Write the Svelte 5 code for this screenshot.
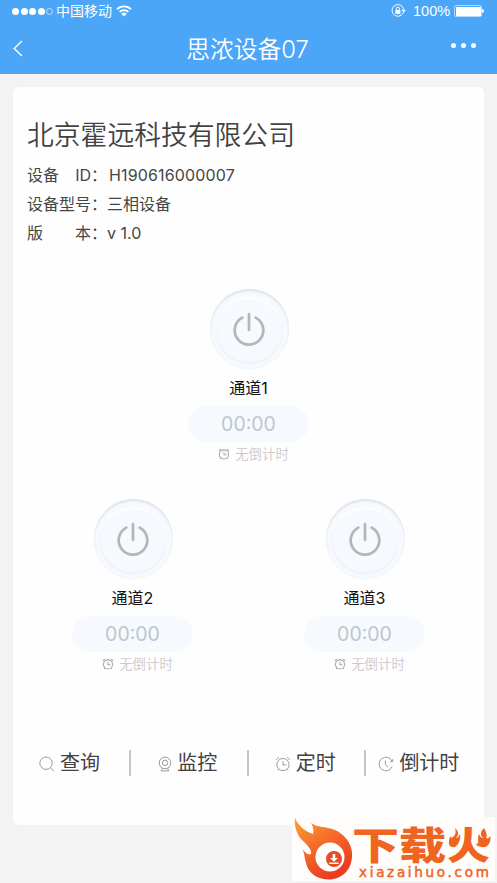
<script>
  let company = "北京霍远科技有限公司";
  let title = "思浓设备07";

  let top = { id: 1, name: "通道1", time: "00:00", note: "无倒计时" };
  let bottom = [
    { id: 2, name: "通道2", time: "00:00", note: "无倒计时" },
    { id: 3, name: "通道3", time: "00:00", note: "无倒计时" }
  ];
</script>

{#snippet clock()}
  <svg viewBox="0 0 16 16" class="clock">
    <circle cx="8" cy="8.6" r="6.1" />
    <path d="M8 5.2v3.8h3.4M1.2 3.9Q2 2 4 1.6M14.8 3.9Q14 2 12 1.6M3.6 13.5l-.8 1M12.4 13.5l.8 1" />
  </svg>
{/snippet}

{#snippet channel(c)}
  <div class="channel">
    <button class="power" aria-label={c.name}>
      <span class="inner">
        <svg viewBox="0 0 34 34">
          <path d="M10.3 5.6a14.3 14.3 0 1 0 13.4 0M17 2.2v15.6" />
        </svg>
      </span>
    </button>
    <div class="name">{c.name}</div>
    <div class="time">{c.time}</div>
    <div class="note">{@render clock()}<span>{c.note}</span></div>
  </div>
{/snippet}

<div class="screen">
  <header>
    <div class="status">
      <div class="signal"><i></i><i></i><i></i><i></i><i class="empty"></i></div>
      <span class="carrier">中国移动</span>
      <svg class="wifi" viewBox="0 0 16 12">
        <path d="M1 4.3a10 10 0 0 1 14 0M3.5 6.9a6.4 6.4 0 0 1 9 0" />
        <path class="fill" d="M8 11.4 5.2 8.8a4 4 0 0 1 5.6 0z" />
      </svg>
      <svg class="lock" viewBox="0 0 15 14">
        <path d="M12.6 7.6a5.8 5.8 0 1 1 .1-1.8M11 6.1h3.2l-1.6 2z" />
        <path d="M5.3 6V4.8a1.6 1.6 0 0 1 3.2 0V6" />
        <rect x="4.4" y="5.9" width="5" height="4" />
      </svg>
      <span class="percent">100%</span>
      <div class="battery"><b></b></div>
    </div>
    <div class="bar">
      <svg class="back" viewBox="0 0 10 17"><path d="M9 1 1.2 8.5 9 16" /></svg>
      <h1>{title}</h1>
      <div class="more"><i></i><i></i><i></i></div>
    </div>
  </header>

  <main>
    <h2>{company}</h2>
    <div class="info">
      <div class="row"><span class="label"><span>设备</span><span>ID：</span></span><span class="value serial">H190616000007</span></div>
      <div class="row"><span class="label"><span>设备型号：</span></span><span class="value">三相设备</span></div>
      <div class="row"><span class="label"><span>版</span><span>本：</span></span><span class="value">v 1.0</span></div>
    </div>

    <div class="channels single">{@render channel(top)}</div>
    <div class="channels">
      {#each bottom as c (c.id)}
        {@render channel(c)}
      {/each}
    </div>

    <nav>
      <a href="#query">
        <svg viewBox="0 0 16 16"><circle cx="7" cy="7.2" r="6.2" /><path d="m11.5 11.7 3.6 3.5" /></svg>
        <span>查询</span>
      </a>
      <a href="#monitor" class="monitor">
        <svg class="small" viewBox="0 0 14 16">
          <circle cx="7" cy="7" r="5.8" /><circle cx="7" cy="6.8" r="2.7" />
          <path d="M4 12.3 3.6 14.9M10 12.3l.4 2.6M2.8 14.9h8.4" />
        </svg>
        <span>监控</span>
      </a>
      <a href="#timer">{@render clock()}<span>定时</span></a>
      <a href="#countdown">
        <svg viewBox="0 0 16 16"><path d="M14.2 10.6a6.8 6.8 0 1 1-.1-5.4M14.7 3.2v2.5h-2.6M7.4 4.5v4.2l2.8 2.4" /></svg>
        <span>倒计时</span>
      </a>
    </nav>
  </main>

  <div class="watermark">
    <svg class="flame" viewBox="0 0 60 64">
      <defs>
        <linearGradient id="fire" x1="0" y1="0" x2=".55" y2="1">
          <stop offset="0" stop-color="#fba13a" />
          <stop offset=".5" stop-color="#f56b29" />
          <stop offset="1" stop-color="#e93c23" />
        </linearGradient>
      </defs>
      <path fill="url(#fire)" d="M3 1C6 8 12 14 21 17C22 13 21 9 19 6C26 11 33 9 43 13C54 18 61 28 60 40C59 54 49 62.500 37 62.500C25 62.500 16 56 14 46C12.500 41 12.500 37 10.500 32C13 36 16 38 19 37C20 32 15 28 9 22C5 17 2 9 3 1Z" />
      <circle cx="38" cy="40" r="14.5" fill="#fff" />
      <circle cx="42" cy="42" r="8" fill="#e94b26" />
      <path fill="#fff" d="M40.7 37h2.6v4h2.6L42 44.8 38 41h2.7zM37.3 45.5h9.4v1.6h-9.4z" />
    </svg>
    <div class="brand">
      <div class="zh"><span class="wide">下载</span><span class="fire">火</span></div>
      <div class="url">xiazaihuo.com</div>
    </div>
    <svg class="sparks" viewBox="0 0 44 26">
      <path class="gap" d="M0 0h16v13l-4 9H0zM28 0h16v22H32l-4-8z" />
      <path d="M7 2C11 6 11 9 8 12C10 12 11 10 12 8C13 13 11 18 7 21C3 22 0 19 1 15C1 13 2 12 2 10C3 12 4 12 5 11C8 8 8 6 7 2Z" />
      <path d="M36 2C32 6 32 9 35 12C33 12 32 10 31 8C29 13 31 16 30 19C32 22 38 22 40 19C43 16 42 13 43 10C41 12 39 13 38 12C40 9 38 6 36 2Z" />
    </svg>
  </div>
</div>

<style>
  :global(body) {
    margin: 0;
  }

  .screen {
    position: relative;
    width: 497px;
    height: 883px;
    overflow: hidden;
    background: #f3f3f3;
    font-family: Inter, "Noto Sans CJK SC", sans-serif;
    color: #454545;
  }

  header {
    height: 74px;
    background: #4ba6f8;
    color: #fff;
  }

  .status {
    height: 22px;
    display: flex;
    align-items: center;
    padding: 0 13px 0 12px;
  }

  .signal {
    display: flex;
    gap: 1.5px;
    width: 43px;
  }

  .signal i {
    box-sizing: border-box;
    width: 7px;
    height: 7px;
    border-radius: 50%;
    background: #fff;
  }

  .signal .empty {
    background: none;
    border: 1px solid #c4e1fd;
  }

  .carrier {
    font: 14px/20px "Noto Sans CJK SC", sans-serif;
    margin: -2px 0 0 1px;
  }

  svg {
    display: block;
    flex: none;
    fill: none;
    stroke: currentColor;
  }

  .wifi {
    width: 16px;
    height: 12px;
    margin-left: 4px;
    stroke-width: 1.8;
  }

  .wifi .fill {
    fill: #fff;
    stroke: none;
  }

  .lock {
    width: 15px;
    height: 14px;
    margin-left: auto;
    stroke-width: 1;
  }

  .lock rect {
    fill: #fff;
    stroke: none;
  }

  .percent {
    font: 14.5px/22px "Liberation Sans", sans-serif;
    margin-left: 7px;
    width: 41px;
    white-space: nowrap;
  }

  .battery {
    position: relative;
    box-sizing: border-box;
    width: 28px;
    height: 12px;
    padding: 0.5px;
    border: 1px solid #b4d9fc;
    border-radius: 2px;
    margin-right: 2px;
  }

  .battery b {
    display: block;
    height: 9px;
    background: #fff;
  }

  .battery::after {
    content: "";
    position: absolute;
    right: -3px;
    top: 3px;
    width: 2px;
    height: 4px;
    border-radius: 0 2px 2px 0;
    background: #fff;
  }

  .bar {
    height: 52px;
    display: flex;
    align-items: center;
    justify-content: space-between;
    padding: 0 21px 0 13px;
  }

  .back {
    width: 10px;
    height: 17px;
    margin-right: 21px;
    stroke-width: 1.4;
  }

  h1 {
    margin: 3px 0 0;
    font: 350 23.8px/50px Inter, "Noto Sans CJK SC", sans-serif;
  }

  .more {
    display: flex;
    gap: 5px;
    margin-top: -6px;
  }

  .more i {
    width: 5px;
    height: 5px;
    border-radius: 50%;
    background: #fff;
  }

  main {
    box-sizing: border-box;
    width: 471px;
    height: 738px;
    margin: 13px 0 0 13px;
    padding-top: 27px;
    border-radius: 6px;
    background: #fefefe;
  }

  h2 {
    margin: 0 0 7px 14px;
    font: 350 26.8px/40px "Noto Sans CJK SC", sans-serif;
    color: #424242;
  }

  .info {
    margin-left: 14px;
    font-size: 16px;
    font-weight: 400;
  }

  .row {
    display: flex;
    height: 29px;
    line-height: 29px;
  }

  .label {
    display: flex;
    justify-content: space-between;
    width: 80px;
    white-space: nowrap;
  }

  .serial {
    margin-left: 2px;
    letter-spacing: 0.15px;
  }

  .channels {
    display: flex;
    justify-content: space-between;
    height: 210px;
    padding: 0 59px;
  }

  .single {
    justify-content: center;
    margin-top: 41px;
  }

  .channel {
    width: 121px;
    display: flex;
    flex-direction: column;
    align-items: center;
  }

  .power {
    box-sizing: border-box;
    width: 79px;
    height: 80px;
    margin: 0 0 0 1px;
    padding: 5px;
    border: 0;
    border-radius: 50%;
    background: #f6f9fd;
    box-shadow: inset 0 2px 2px #dfe3e9, inset 0 0 2px #eff2f6, 0 1px 1px #f9fbfd;
    color: #b6b6b8;
  }

  .inner {
    box-sizing: border-box;
    display: flex;
    justify-content: center;
    width: 68px;
    height: 67px;
    margin: 2px auto 0;
    padding-top: 15px;
    border-radius: 50%;
    background: #f6f9fe;
    box-shadow: inset 0 2px 1px #fdfeff, inset 0 -1px 3px #e9edf2;
  }

  .power svg {
    width: 34px;
    height: 34px;
    stroke-width: 2.7;
    stroke-linecap: round;
  }

  .name {
    height: 37px;
    font: 16px/38px Inter, "Noto Sans CJK SC", sans-serif;
    color: #111;
  }

  .time {
    width: 121px;
    height: 36px;
    border-radius: 18px;
    background: #f6faff;
    font-size: 19.5px;
    font-weight: 400;
    line-height: 36px;
    text-align: center;
    color: #bfc5cc;
  }

  .note {
    display: flex;
    align-items: center;
    gap: 5px;
    height: 24px;
    margin-left: 10px;
    font: 350 13.4px/22px "Noto Sans CJK SC", sans-serif;
    color: #cbc8cc;
  }

  .note span {
    margin-top: -2px;
  }

  .note .clock {
    width: 12px;
    height: 12px;
    stroke-width: 1.4;
    color: #a9a9a9;
  }

  nav {
    display: flex;
    margin-top: 41px;
  }

  nav a {
    box-sizing: border-box;
    display: flex;
    align-items: center;
    width: 117.6px;
    height: 26px;
    padding-left: 26px;
    gap: 5px;
    border-right: 2px solid #c3c7cc;
    font: 20px/24px "Noto Sans CJK SC", sans-serif;
    color: #424242;
    text-decoration: none;
    white-space: nowrap;
  }

  nav a:first-child {
    width: 118.2px;
  }

  nav a span {
    margin-top: -2px;
  }

  nav a:last-child {
    border: 0;
    padding-left: 12px;
  }

  nav .monitor {
    padding-left: 27px;
  }

  nav svg {
    width: 16px;
    height: 16px;
    margin-top: 1px;
    stroke-width: 1;
    color: #9c9c9c;
  }

  nav .small {
    width: 14px;
  }

  .watermark {
    position: absolute;
    left: 292px;
    top: 817px;
    width: 203px;
    height: 64px;
    display: flex;
    background: #fffdfb;
    color: #ef641f;
  }

  .flame {
    width: 60px;
    height: 64px;
    stroke: none;
  }

  .zh {
    display: flex;
    width: 140px;
    height: 37px;
    margin-top: 8px;
    font: 900 38px/36px "Noto Sans CJK SC", sans-serif;
  }

  .zh span {
    display: block;
    transform-origin: left;
  }

  .wide {
    width: 95px;
    transform: scaleX(1.24);
  }

  .fire {
    width: 43px;
    transform: scaleX(1.13);
  }

  .url {
    margin-left: 7px;
    font: 13.5px/20px "DejaVu Sans", sans-serif;
    -webkit-text-stroke: 0.5px #ef641f;
    letter-spacing: 2.7px;
    white-space: nowrap;
  }

  .sparks {
    position: absolute;
    left: 156px;
    top: 9px;
    width: 44px;
    height: 26px;
    fill: #ef641f;
    stroke: none;
  }

  .sparks .gap {
    fill: #fffdfb;
  }
</style>
